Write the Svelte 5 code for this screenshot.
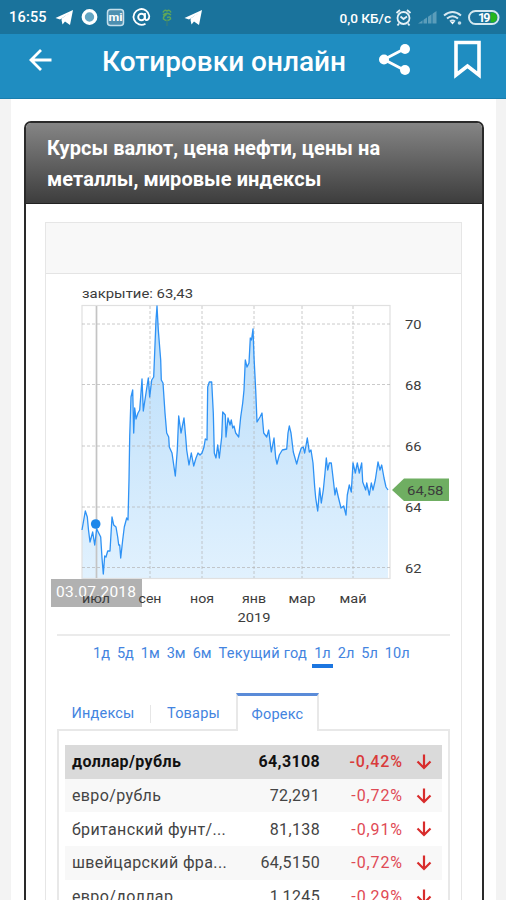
<script>
  let period = $state('1л')
  let tab = $state('Форекс')

  const periods = ['1д', '5д', '1м', '3м', '6м', 'Текущий год', '1л', '2л', '5л', '10л']
  const tabs = ['Индексы', 'Товары', 'Форекс']

  const rows = [
    { name: 'доллар/рубль', value: '64,3108', change: '-0,42%' },
    { name: 'евро/рубль', value: '72,291', change: '-0,72%' },
    { name: 'британский фунт/...', value: '81,138', change: '-0,91%' },
    { name: 'швейцарский фра...', value: '64,5150', change: '-0,72%' },
    { name: 'евро/доллар', value: '1,1245', change: '-0,29%' },
  ]

  // axis ticks
  const yTicks = [
    { label: '70', y: 324 },
    { label: '68', y: 384.5 },
    { label: '66', y: 446 },
    { label: '64', y: 507 },
    { label: '62', y: 567.5 },
  ]
  const xTicks = [
    { label: 'июл', x: 96, w: 28 },
    { label: 'сен', x: 150, w: 23 },
    { label: 'ноя', x: 202, w: 24 },
    { label: 'янв', x: 254, w: 24 },
    { label: 'мар', x: 302, w: 27 },
    { label: 'май', x: 353, w: 27 },
  ]

  const line =
    '82,530 85.3,511 87.3,517 88.5,530 90,542 92.7,532 94.7,545 96.7,529 100.7,537 102,558 103.3,574 104.7,556 106,557 107.7,551 110,551 ' +
    '112,517 113.7,525 116,527 117.7,537 118.7,545 119.7,545 120.7,558 122.7,540 124.3,527 126.7,518 128,520 129,480 129.7,437 131,397 ' +
    '132.7,390 133.7,433 134.7,408 136,419 138,413 139.7,410 142,379 143.3,411 145.7,395 148.3,378 149.7,397 151.7,380 153.7,377 156,320 ' +
    '157,306 158.3,330 160.7,360 161.3,380 163,383 165,413 166.7,433 168.7,437 169.3,447 172,453 175.3,476 177.3,450 178.7,416 181,433 ' +
    '184,418 185.7,437 186.7,450 189,465 191.3,453 193.7,466 196,458 198,453 200,455 202,453 204,447 205.3,439 207,440 207.7,387 ' +
    '209.3,382 211.7,382 213.3,413 214.3,453 216,458 217.7,445 219.3,458 221.7,437 222.7,412 225.3,415 226,437 228,418 230,425 231.3,420 ' +
    '232.7,428 234,426 235.7,433 238.7,437 240.7,417 242.7,403 244,390 245.3,360 247,367 249,363 250.3,338 251.5,340 253,329 254,357 ' +
    '255.7,390 257,422 260,417 262,413 263.7,433 266.7,437 268.7,430 271.3,452 274,438 275.7,458 277,464 279.3,455 282.3,450 286.7,449 ' +
    '288,433 289.3,426 291,433 293.3,452 296.7,464 299,455 301.3,448 303.3,447 304.7,453 307.3,438 309.3,452 311,450 313,463 314.7,487 ' +
    '315.7,498 317.7,511 319.7,488 321.3,503 323.3,490 325,473 326.3,458 327.7,470 329.3,463 331.3,463 333.3,480 335,495 336.3,488 ' +
    '338.3,497 341,508 343.7,506 346,515 347.3,495 349.3,485 351.3,492 353,463 355.3,473 357.3,463 359.3,473 361.7,463 362.7,482 ' +
    '365.7,490 366.7,483 369.3,495 371.3,483 373,490 375.3,480 378,462 380,470 381.7,465 384,478 386,487 388,490'
</script>

<div class="screen">
  <div class="status">
    <span class="time">16:55</span>
    <svg class="left-icons" width="150" height="22" viewBox="54 6 150 22">
      <path d="M55.500 18 73 10 70 25 65 21.500 62.500 24.500 61.500 20 69 13.500 60 19.500Z" fill="#fff" />
      <path d="M61 19 69 13 64 21Z" fill="#fff" />
      <circle cx="89.500" cy="17" r="6.300" fill="#63a5c3" stroke="#fff" stroke-width="3.200" />
      <rect x="107.500" y="9.500" width="16" height="16" rx="3" fill="#4d8fb0" stroke="#c5dfeb" stroke-width="1.500" />
      <text x="108.500" y="21" font-size="10" font-weight="700" fill="#fff" textLength="14" lengthAdjust="spacingAndGlyphs">mi</text>
      <circle cx="141.500" cy="17" r="3.300" fill="none" stroke="#fff" stroke-width="1.900" />
      <path d="M145 13V18.500Q145.500 20.500 147.500 20Q149.500 18.500 149.300 16A7.900 7.900 0 1 0 145.500 23.700" fill="none" stroke="#fff" stroke-width="1.800" />
      <path d="M163 12.500Q164.500 9 167 11Q169.500 9 171 12.500M163 15Q167 11.500 171 15M167 14Q163 16 163.500 19Q167 22 170.500 19Q171 16 167 17.500" fill="none" stroke="#5fa65a" stroke-width="1.500" />
      <path d="M167 20V26" stroke="#397f78" stroke-width="1.200" />
      <path d="M184.500 18 202 10 199 25 194 21.500 191.500 24.500 190.500 20 198 13.500 189 19.500Z" fill="#fff" />
      <path d="M190 19 198 13 193 21Z" fill="#fff" />
    </svg>
    <span class="speed">0,0 КБ/с</span>
    <svg class="right-icons" width="108" height="22" viewBox="394 6 108 22">
      <g fill="none" stroke="#e5f1f7" stroke-width="1.800">
        <circle cx="403.500" cy="18" r="6" />
        <path d="M400.500 16.500 403.500 19 407 16.500M396.500 13 400 10M407 10 410.500 13M399 23.500 397.500 25.500M408 23.500 409.500 25.500" />
      </g>
      <path d="M418 23.500 436.500 11V23.500Z" fill="#5b9dba" />
      <path d="M423 19V24M427.500 16V24M432 13V24" stroke="#1b739d" stroke-width="1" />
      <g fill="none" stroke="#d8e9f2" stroke-width="2">
        <path d="M444 15.500Q452.500 8.500 461 15.500" />
        <path d="M447 18.500Q452.500 14 458 18.500" />
        <path d="M450 21.500Q452.500 19.500 455 21.500" />
      </g>
      <path d="M450.500 22H454.500L452.500 24.500Z" fill="#fff" />
      <circle cx="459.500" cy="23" r="1.800" fill="#c1dce9" />
      <rect x="469" y="11" width="29.500" height="13" rx="6.500" fill="#1b739d" stroke="#d5e8f0" stroke-width="2" />
      <path d="M490.500 12.500H493Q497 13.500 497 17.500Q497 21.500 493 22.500H490.500Z" fill="#25b51e" />
      <text x="478" y="22" font-size="12.500" font-weight="700" fill="#fff" textLength="12.500">19</text>
    </svg>
  </div>

  <header class="appbar">
    <svg class="back" width="26" height="26" viewBox="27 47 26 26">
      <path d="M51.500 60H31M41 50 31 60 41 70" fill="none" stroke="#fff" stroke-width="2.800" />
    </svg>
    <h1>Котировки онлайн</h1>
    <svg class="share" width="34" height="34" viewBox="378 43 34 34">
      <path d="M405 48.500 384 59.500 405 70.500" fill="none" stroke="#fff" stroke-width="2.800" />
      <circle cx="405" cy="49" r="5" fill="#fff" />
      <circle cx="384" cy="59.500" r="5" fill="#fff" />
      <circle cx="405" cy="70" r="5" fill="#fff" />
    </svg>
    <svg class="mark" width="28" height="40" viewBox="453 40 28 40">
      <path d="M456 42.500H479V75L467.500 66 456 75Z" fill="none" stroke="#fff" stroke-width="3.600" />
    </svg>
  </header>

  <main>
    <section class="widget">
      <h2>Курсы валют, цена нефти, цены на<br />металлы, мировые индексы</h2>
      <div class="frame">
        <div class="frame-head"></div>
        <svg class="chart" width="415" height="360" viewBox="46 274 415 360">
          <defs>
            <linearGradient id="area" x1="0" y1="0" x2="0" y2="1">
              <stop offset="0" stop-color="#8cc7f7" stop-opacity=".62" />
              <stop offset="1" stop-color="#cfe9fd" stop-opacity=".62" />
            </linearGradient>
          </defs>
          <text x="82" y="298" textLength="111" lengthAdjust="spacingAndGlyphs">закрытие: 63,43</text>
          <polygon points="82,578 {line} 388,578" fill="url(#area)" />
          <rect x="82" y="305.500" width="308" height="273" fill="none" stroke="#e0e0e0" stroke-width="1.200" />
          <g class="grid">
            {#each yTicks as t}
              <line x1="82" x2="390" y1={t.y} y2={t.y} />
            {/each}
            {#each xTicks.slice(1) as t}
              <line x1={t.x} x2={t.x} y1="306" y2="578" />
            {/each}
          </g>
          <line x1="96.500" x2="96.500" y1="306" y2="578" stroke="#c4c4c4" stroke-width="1.700" />
          <polyline points={line} fill="none" stroke="#2e92f5" stroke-width="1.300" stroke-linejoin="round" />
          <circle cx="95.700" cy="524" r="4.800" fill="#1e88ea" />

          <rect x="51" y="579" width="91" height="28" fill="#b1b1b1" />
          <text x="56" y="597" fill="#fff" font-size="15.500" textLength="80">03.07.2018</text>
          {#each xTicks as t}
            <text x={t.x - t.w / 2} y="603" textLength={t.w} lengthAdjust="spacingAndGlyphs">{t.label}</text>
          {/each}
          <text x="237.500" y="621.500" textLength="33" lengthAdjust="spacingAndGlyphs">2019</text>

          {#each yTicks as t}
            <text x="405" y={t.y + 5} textLength="16.5" lengthAdjust="spacingAndGlyphs">{t.label}</text>
          {/each}
          <polygon points="392,490 404,478.500 449,478.500 449,501 404,501" fill="#6fae62" />
          <text x="407" y="494.500" textLength="36.500" lengthAdjust="spacingAndGlyphs">64,58</text>
        </svg>

        <nav class="periods">
          {#each periods as p}
            <button class:active={p === period} class:wide={p.length > 3} onclick={() => (period = p)}>{p}</button>
          {/each}
        </nav>

        <div class="tabs">
          {#each tabs as t}
            <button class:active={t === tab} onclick={() => (tab = t)}>{t}</button>
          {/each}
          <span class="rest"></span>
        </div>

        <div class="quotes">
          {#each rows as row}
            <div class="row">
              <span class="name">{row.name}</span>
              <span class="value">{row.value}</span>
              <span class="change">{row.change}</span>
              <svg width="16" height="16" viewBox="0 0 16 16">
                <path d="M8 .5V14M1.500 7.500 8 14 14.500 7.500" fill="none" stroke="#d82c2c" stroke-width="2.200" />
              </svg>
            </div>
          {/each}
        </div>
      </div>
    </section>
  </main>
</div>

<style>
  :global(body) {
    margin: 0;
    overflow: hidden;
  }

  .screen {
    width: 506px;
    height: 900px;
    overflow: hidden;
    background: #f3f3f3;
    font-family: Roboto, 'Liberation Sans', sans-serif;
    display: flex;
    flex-direction: column;
  }

  .screen svg {
    display: block;
    flex: none;
  }

  .status {
    flex: none;
    height: 34px;
    box-sizing: border-box;
    padding: 0 4px 0 9px;
    background: #1a739c;
    color: #fff;
    display: flex;
    align-items: center;
  }
  .time {
    width: 45px;
    font-size: 14.5px;
    font-weight: 500;
    letter-spacing: .2px;
    padding-top: 1px;
  }
  .speed {
    margin-left: auto;
    margin-right: 3px;
    padding-top: 1px;
    font-size: 13.6px;
    font-weight: 500;
    white-space: nowrap;
  }

  .appbar {
    flex: none;
    height: 65px;
    box-sizing: border-box;
    padding: 0 25px 12px 27px;
    background: #1f8dc1;
    border-bottom: 1px solid #187eae;
    color: #fff;
    display: flex;
    align-items: center;
  }
  h1 {
    margin: 3px 0 0 49px;
    width: 276px;
    font-size: 28px;
    line-height: 34px;
    font-weight: 500;
    white-space: nowrap;
  }
  .share {
    margin-right: 41px;
  }

  main {
    flex: none;
    height: 900px;
    margin: 0 10px 0 11px;
    padding: 22px 12px 0 13px;
    box-sizing: border-box;
    background: #fff;
  }
  .widget {
    height: 900px;
    box-sizing: border-box;
    border: 2.5px solid #2a2a2a;
    border-radius: 7px;
    overflow: hidden;
  }
  h2 {
    margin: 0;
    height: 81px;
    box-sizing: border-box;
    padding: 10px 0 0 21px;
    background: linear-gradient(#858585, #3d3d3d);
    border-bottom: 1px solid #222;
    color: #fff;
    font-size: 20px;
    line-height: 31px;
    font-weight: 700;
    letter-spacing: .07px;
    white-space: nowrap;
  }

  .frame {
    width: 415px;
    margin: 18px 0 0 19px;
    border: 1px solid #e6e6e6;
  }
  .frame-head {
    height: 50px;
    background: #f8f8f8;
    border-bottom: 1px solid #e4e4e4;
  }
  .chart {
    font-size: 13.2px;
    fill: #3c3c3c;
  }
  .grid line {
    stroke: #b4b4b4;
    stroke-opacity: .7;
    stroke-width: 1;
    stroke-dasharray: 3 2;
  }

  button {
    border: 0;
    padding: 0;
    background: none;
    font: inherit;
    letter-spacing: inherit;
    color: #4384e0;
    white-space: nowrap;
    cursor: pointer;
  }

  .periods {
    margin: 0 11px;
    height: 59px;
    box-sizing: border-box;
    padding: 7px 0 0 34px;
    border-top: 2px solid #ebebeb;
    display: flex;
    align-items: flex-start;
    gap: 3px;
    font-size: 14.5px;
  }
  .periods button {
    height: 25px;
    padding: 0 2px 1px;
    box-sizing: border-box;
    border-bottom: 4px solid transparent;
  }
  .periods .wide {
    letter-spacing: .32px;
  }
  .periods .active {
    border-bottom-color: #1c76e0;
  }

  .tabs {
    margin: 0 11px;
    height: 38px;
    display: grid;
    grid-template-columns: 94px 85px 83px 1fr;
    font-size: 14.5px;
    letter-spacing: .2px;
  }
  .tabs button,
  .rest {
    border-bottom: 2px solid #e8e8e8;
    padding-top: 5px;
  }
  .tabs button:first-child {
    padding-right: 2px;
    background: linear-gradient(#e6e6e6, #e6e6e6) no-repeat 100% 12px / 1px 18px;
  }
  .tabs .active {
    border: 2px solid #e8e8e8;
    border-top: 3px solid #5a8bd8;
    border-bottom: 0;
    padding-top: 2px;
  }

  .quotes {
    margin: 0 11px;
    padding: 14px 6px 0;
    height: 300px;
    border: solid #e8e8e8;
    border-width: 0 2px;
  }
  .row {
    height: 33.7px;
    box-sizing: border-box;
    padding: 0 10px 0 7px;
    display: grid;
    grid-template-columns: 160px 88px 82px 1fr;
    align-items: center;
    justify-items: end;
    font-size: 16px;
    color: #444;
  }
  .row:nth-child(even) {
    background: #f8f8f8;
  }
  .row:first-child {
    background: #dadada;
    color: #111;
    font-weight: 700;
  }
  .row .name {
    justify-self: start;
    white-space: nowrap;
    letter-spacing: .37px;
  }
  .row .value {
    letter-spacing: .35px;
  }
  .row .change {
    color: #df4a55;
    letter-spacing: .9px;
    margin-right: -1px;
  }
  .row:first-child .change {
    color: #d93b3b;
    font-weight: 500;
  }
</style>
